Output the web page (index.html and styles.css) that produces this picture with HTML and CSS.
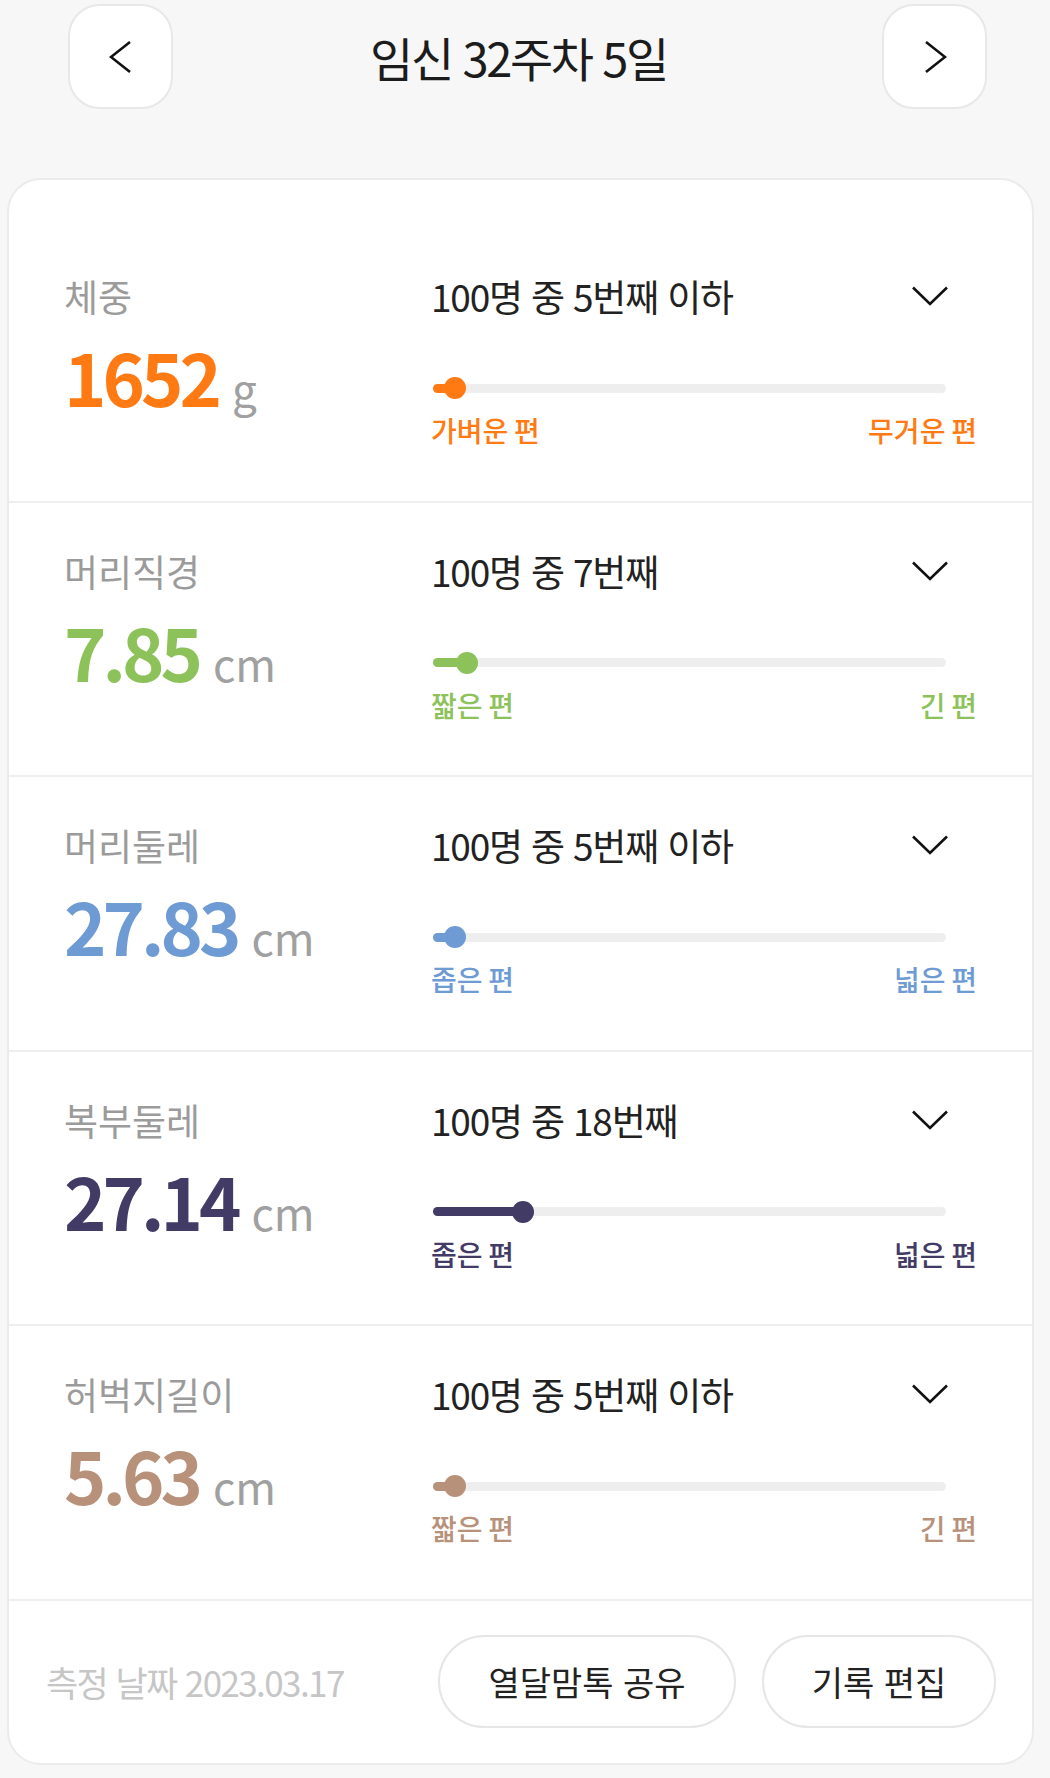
FILE: index.html
```html
<!DOCTYPE html>
<html lang="ko">
<head>
<meta charset="utf-8">
<title>임신 32주차 5일</title>
<link rel="stylesheet" href="styles.css">
</head>
<body>
<header class="header">
  <button class="nav-btn" aria-label="이전">
    <svg width="24" height="34" viewBox="0 0 24 34"><path d="M21 2 L2 17 L21 32" fill="none" stroke="#111" stroke-width="2.6"/></svg>
  </button>
  <h1 class="title">임신 32주차 5일</h1>
  <button class="nav-btn" aria-label="다음">
    <svg width="24" height="34" viewBox="0 0 24 34"><path d="M3 2 L22 17 L3 32" fill="none" stroke="#111" stroke-width="2.6"/></svg>
  </button>
</header>

<main class="card">
  <section class="row orange">
    <div class="left">
      <div class="label">체중</div>
      <div class="value"><span class="num">1652</span><span class="unit">g</span></div>
    </div>
    <div class="right">
      <div class="rank"><span>100명 중 5번째 이하</span>
        <svg class="chev" width="36" height="20" viewBox="0 0 36 20"><path d="M1 1.5 L18 18 L35 1.5" fill="none" stroke="#111" stroke-width="2.6"/></svg>
      </div>
      <div class="slider"><div class="track"></div><div class="fill" style="width:22px"></div><div class="knob" style="left:22px"></div></div>
      <div class="ends"><span>가벼운 편</span><span>무거운 편</span></div>
    </div>
  </section>

  <section class="row green">
    <div class="left">
      <div class="label">머리직경</div>
      <div class="value"><span class="num">7.85</span><span class="unit">cm</span></div>
    </div>
    <div class="right">
      <div class="rank"><span>100명 중 7번째</span>
        <svg class="chev" width="36" height="20" viewBox="0 0 36 20"><path d="M1 1.5 L18 18 L35 1.5" fill="none" stroke="#111" stroke-width="2.6"/></svg>
      </div>
      <div class="slider"><div class="track"></div><div class="fill" style="width:34px"></div><div class="knob" style="left:34px"></div></div>
      <div class="ends"><span>짧은 편</span><span>긴 편</span></div>
    </div>
  </section>

  <section class="row blue">
    <div class="left">
      <div class="label">머리둘레</div>
      <div class="value"><span class="num">27.83</span><span class="unit">cm</span></div>
    </div>
    <div class="right">
      <div class="rank"><span>100명 중 5번째 이하</span>
        <svg class="chev" width="36" height="20" viewBox="0 0 36 20"><path d="M1 1.5 L18 18 L35 1.5" fill="none" stroke="#111" stroke-width="2.6"/></svg>
      </div>
      <div class="slider"><div class="track"></div><div class="fill" style="width:22px"></div><div class="knob" style="left:22px"></div></div>
      <div class="ends"><span>좁은 편</span><span>넓은 편</span></div>
    </div>
  </section>

  <section class="row purple">
    <div class="left">
      <div class="label">복부둘레</div>
      <div class="value"><span class="num">27.14</span><span class="unit">cm</span></div>
    </div>
    <div class="right">
      <div class="rank"><span>100명 중 18번째</span>
        <svg class="chev" width="36" height="20" viewBox="0 0 36 20"><path d="M1 1.5 L18 18 L35 1.5" fill="none" stroke="#111" stroke-width="2.6"/></svg>
      </div>
      <div class="slider"><div class="track"></div><div class="fill" style="width:90px"></div><div class="knob" style="left:90px"></div></div>
      <div class="ends"><span>좁은 편</span><span>넓은 편</span></div>
    </div>
  </section>

  <section class="row tan">
    <div class="left">
      <div class="label">허벅지길이</div>
      <div class="value"><span class="num">5.63</span><span class="unit">cm</span></div>
    </div>
    <div class="right">
      <div class="rank"><span>100명 중 5번째 이하</span>
        <svg class="chev" width="36" height="20" viewBox="0 0 36 20"><path d="M1 1.5 L18 18 L35 1.5" fill="none" stroke="#111" stroke-width="2.6"/></svg>
      </div>
      <div class="slider"><div class="track"></div><div class="fill" style="width:22px"></div><div class="knob" style="left:22px"></div></div>
      <div class="ends"><span>짧은 편</span><span>긴 편</span></div>
    </div>
  </section>

  <footer class="foot">
    <div class="date">측정 날짜 2023.03.17</div>
    <button class="pill share">열달맘톡 공유</button>
    <button class="pill edit">기록 편집</button>
  </footer>
</main>
</body>
</html>
```

FILE: styles.css
```css
* { box-sizing: border-box; }

html, body {
  margin: 0;
  padding: 0;
}

body {
  background: #f7f7f7;
  font-family: "Noto Sans CJK KR", "Noto Sans", sans-serif;
  color: #222;
  width: 1050px;
}

.header {
  display: grid;
  grid-template-columns: 105px 1fr 105px;
  align-items: center;
  padding: 4px 63px 0 68px;
  height: 109px;
}

.nav-btn {
  width: 105px;
  height: 105px;
  border: 2px solid #e8e8e8;
  border-radius: 32px;
  background: #fff;
  display: flex;
  align-items: center;
  justify-content: center;
  padding: 0;
}

.title {
  margin: 0;
  padding-right: 18px;
  text-align: center;
  font-size: 47px;
  font-weight: 400;
  letter-spacing: -2.4px;
  line-height: 105px;
  color: #1c1c1c;
}

.card {
  margin: 69px 16px 15px 7px;
  background: #fff;
  border: 2px solid #ebebeb;
  border-radius: 34px;
  padding-top: 48px;
}

.row {
  display: grid;
  grid-template-columns: 367px 1fr;
  padding: 0 57px 0 55px;
  height: 274.5px;
  border-bottom: 2px solid #efefef;
}

.left, .right {
  padding-top: 46px;
}

.label {
  font-size: 37px;
  line-height: 44px;
  letter-spacing: 0;
  color: #9b9b9b;
}

.value {
  margin-top: 18px;
  font-size: 72px;
  line-height: 80px;
  font-weight: 700;
  white-space: nowrap;
}

.num {
  letter-spacing: -4px;
}

.unit {
  margin-left: 14px;
  font-size: 44px;
  font-weight: 400;
  line-height: 1;
  color: #a0a0a0;
}

.rank {
  display: flex;
  justify-content: space-between;
  align-items: flex-start;
  padding-right: 27px;
  font-size: 37px;
  line-height: 44px;
  letter-spacing: -1.2px;
  color: #222;
}

.chev {
  margin-top: 12px;
  display: block;
}

.slider {
  position: relative;
  margin-top: 59px;
  margin-left: 2px;
  margin-right: 29px;
  height: 22px;
}

.track {
  position: absolute;
  left: 0;
  right: 0;
  top: 6.5px;
  height: 9px;
  border-radius: 5px;
  background: #eeeeee;
}

.fill {
  position: absolute;
  left: 0;
  top: 6.5px;
  height: 9px;
  border-radius: 5px 0 0 5px;
  background: var(--accent);
}

.knob {
  position: absolute;
  top: 0;
  width: 22px;
  height: 22px;
  margin-left: -11px;
  border-radius: 50%;
  background: var(--accent);
}

.ends {
  margin-top: 14px;
  margin-right: -2px;
  display: flex;
  justify-content: space-between;
  font-size: 28px;
  line-height: 34px;
  letter-spacing: 0;
  word-spacing: -2px;
  font-weight: 500;
  color: var(--accent);
}

.orange { --accent: #ff7a12; }
.green { --accent: #8dc25a; }
.blue { --accent: #6f9bd4; }
.purple { --accent: #423b66; }
.tan { --accent: #b8917a; }

.value .num { color: var(--accent); }

.foot {
  display: flex;
  align-items: center;
  height: 162px;
  padding: 0 36px 0 37px;
  gap: 26px;
}

.date {
  flex: 1;
  font-size: 35px;
  letter-spacing: -1.6px;
  color: #c6c6c6;
  white-space: nowrap;
}

.pill {
  height: 93px;
  border: 2px solid #e6e6e6;
  border-radius: 47px;
  background: #fff;
  font-family: "Noto Sans CJK KR", "Noto Sans", sans-serif;
  font-size: 34px;
  letter-spacing: 0;
  color: #222;
  padding: 0;
}

.share { width: 298px; }
.edit { width: 234px; }
```
